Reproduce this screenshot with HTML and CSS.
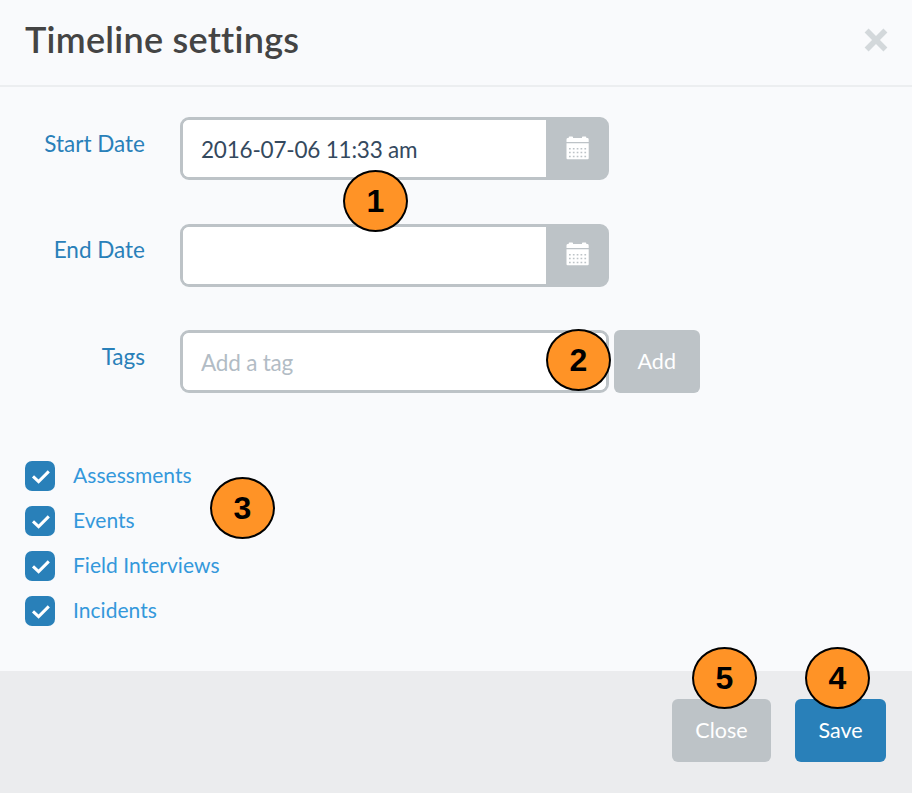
FILE: index.html
```html
<!DOCTYPE html>
<html lang="en">
<head>
<meta charset="utf-8">
<title>Timeline settings</title>
<link rel="stylesheet" href="styles.css">
</head>
<body>
<svg class="defs" width="0" height="0" aria-hidden="true">
  <symbol id="calendar" viewBox="0 0 23 24">
    <path fill="#fff" d="M0.5 6V3.5Q0.5 2 1.5 2H2.7V1.2Q2.7 0.4 3.5 0.4H6.2Q7 0.4 7 1.2V2H16V1.2Q16 0.4 16.8 0.4H19.5Q20.3 0.4 20.3 1.2V2H21.7Q22.7 2 22.7 3.5V6Z"/>
    <path fill="#fff" d="M0.5 7.2H22.7V22.2Q22.7 23.2 21.7 23.2H1.5Q0.5 23.2 0.5 22.2Z"/>
    <path fill="none" stroke="#bdc3c7" stroke-width="1.5" stroke-dasharray="1.7 2.15" d="M3 12.7H20.5M3 16.6H20.5M3 20.5H20.5"/>
  </symbol>
  <symbol id="check" viewBox="0 0 30 30">
    <path fill="none" stroke="#fff" stroke-width="3" d="M8 15.4L13.6 20.6L23.8 10.4"/>
  </symbol>
</svg>
<div class="modal">
  <header class="modal-header">
    <h1 class="title">Timeline settings</h1>
    <button class="dismiss" type="button" aria-label="Dismiss"><svg width="24" height="24" viewBox="0 0 24 24"><path fill="none" stroke="#d3d8db" stroke-width="5.6" d="M2.6 2.6L21.4 21.4M21.4 2.6L2.6 21.4"/></svg></button>
  </header>
  <main class="modal-body">
    <div class="row">
      <label class="label" for="start">Start Date</label>
      <div class="group"><input class="input" id="start" type="text" value="2016-07-06 11:33 am"><span class="addon"><svg class="cal" width="23" height="24"><use href="#calendar"/></svg></span></div>
    </div>
    <div class="row">
      <label class="label" for="end">End Date</label>
      <div class="group"><input class="input" id="end" type="text"><span class="addon"><svg class="cal" width="23" height="24"><use href="#calendar"/></svg></span></div>
    </div>
    <div class="row">
      <label class="label" for="tags">Tags</label>
      <div class="group"><input class="input" id="tags" type="text" placeholder="Add a tag"></div>
      <button class="btn btn-add" type="button">Add</button>
    </div>
    <ul class="checks">
      <li class="check"><span class="box"><svg width="30" height="30"><use href="#check"/></svg></span><span class="name">Assessments</span></li>
      <li class="check"><span class="box"><svg width="30" height="30"><use href="#check"/></svg></span><span class="name">Events</span></li>
      <li class="check"><span class="box"><svg width="30" height="30"><use href="#check"/></svg></span><span class="name">Field Interviews</span></li>
      <li class="check"><span class="box"><svg width="30" height="30"><use href="#check"/></svg></span><span class="name">Incidents</span></li>
    </ul>
  </main>
  <footer class="modal-footer">
    <button class="btn btn-close" type="button">Close</button>
    <button class="btn btn-save" type="button">Save</button>
  </footer>
  <span class="badge badge-1">1</span>
  <span class="badge badge-2">2</span>
  <span class="badge badge-3">3</span>
  <span class="badge badge-4">4</span>
  <span class="badge badge-5">5</span>
</div>
</body>
</html>
```
FILE: styles.css
```css
* { box-sizing: border-box; }
body { margin: 0; font-family: Lato, sans-serif; font-size: 22.5px; font-variant-ligatures: none; }
.defs { position: absolute; }
.modal {
  position: relative;
  display: flex;
  flex-direction: column;
  width: 912px;
  height: 793px;
  overflow: hidden;
  background: #f9fafc;
}
.modal-header {
  display: flex;
  justify-content: space-between;
  height: 87px;
  padding: 17px 24px 0 25px;
  border-bottom: 2px solid #eceef0;
}
.title { margin: 0; font-size: 36px; line-height: 44px; font-weight: 600; letter-spacing: 0.26px; color: #444; }
.dismiss { height: 24px; margin-top: 11px; padding: 0; border: 0; background: none; }
.dismiss svg { display: block; }
.modal-body { flex: none; height: 584px; padding: 30px 25px 0; }
.row { display: flex; height: 63px; margin-bottom: 43.5px; }
.label { width: 120px; margin-right: 35px; padding-top: 11.8px; line-height: 30px; text-align: right; color: #2980b9; }
.group { display: flex; width: 429px; border: 3px solid #bdc3c7; border-radius: 9px; background: #fff; }
.input {
  flex: 1;
  min-width: 0;
  padding: 2px 18px 0;
  border: 0;
  border-radius: 6px;
  background: #fff;
  font: inherit;
  letter-spacing: -0.2px;
  color: #34495e;
}
.input::placeholder { color: #b2bcc5; opacity: 1; }
.addon { display: flex; justify-content: center; width: 60px; padding: 15.5px 0 0 3px; background: #bdc3c7; }
.btn { height: 63px; padding: 0 0 2px; border: 0; border-radius: 6px; background: #bdc3c7; color: #fff; font: inherit; font-size: 21.5px; }
.btn-add { width: 86.5px; margin-left: 4.5px; }
.checks { display: grid; gap: 15px; margin: 0; padding: 24.5px 0 0; list-style: none; }
.check { display: flex; gap: 18px; height: 30px; line-height: 28px; font-size: 21px; letter-spacing: 0.04px; color: #3498db; }
.box { width: 30px; height: 30px; border-radius: 7px; background: #2980b9; }
.box svg { display: block; }
.modal-footer { display: flex; flex: 1; justify-content: flex-end; gap: 24px; padding: 28px 26px 0 0; background: #ebecee; }
.btn-close { width: 99px; }
.btn-save { width: 91px; background: #2980b9; }
.badge {
  position: absolute;
  width: 65px;
  height: 62px;
  border: 2px solid #000;
  border-radius: 50%;
  background: #ff9326;
  color: #000;
  font: bold 32px/58px "Liberation Sans", sans-serif;
  text-align: center;
}
.badge-1 { left: 343px; top: 170px; }
.badge-2 { left: 546px; top: 329px; }
.badge-3 { left: 210px; top: 477px; }
.badge-4 { left: 805px; top: 647px; }
.badge-5 { left: 692px; top: 647px; }
```
